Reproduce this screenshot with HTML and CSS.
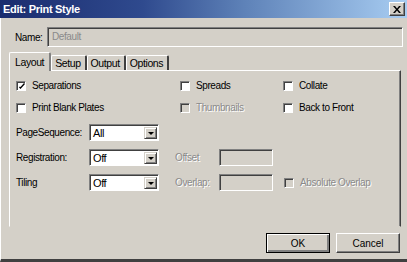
FILE: index.html
```html
<!DOCTYPE html>
<html lang="en">
<head>
    <meta charset="UTF-8">
    <title>Edit: Print Style</title>
    <link rel="stylesheet" href="styles.css">
</head>
<body>
    <div class="window">
        <div class="titlebar">
            <span class="title">Edit: Print Style</span>
            <div class="close">
                <svg width="8" height="7" viewBox="0 0 8 7"><path d="M0 0h2l2 2.5L6 0h2L5 3.5 8 7H6L4 4.5 2 7H0l3-3.5z" fill="#000"/></svg>
            </div>
        </div>
        <div class="content">
            <div class="name-row">
                <label class="name-label">Name:</label>
                <div class="field wide disabled">Default</div>
            </div>

            <div class="tabs">
                <div class="tab active">Layout</div>
                <div class="tab">Setup</div>
                <div class="tab">Output</div>
                <div class="tab">Options</div>
            </div>

            <div class="panel">
                <div class="row first">
                    <label class="cell c1"><span class="check checked"><svg width="6" height="6" viewBox="0 0 6 6"><path d="M0 4.5l1.5 1.5L6 1 5 0 1.5 4 .8 3.5z" fill="#000"/></svg></span>Separations</label>
                    <label class="cell c2"><span class="check"></span>Spreads</label>
                    <label class="cell c3"><span class="check"></span>Collate</label>
                </div>
                <div class="row second">
                    <label class="cell c1"><span class="check"></span>Print Blank Plates</label>
                    <label class="cell c2 off"><span class="check"></span>Thumbnails</label>
                    <label class="cell c3"><span class="check"></span>Back to Front</label>
                </div>
                <div class="row">
                    <span class="field-label">PageSequence:</span>
                    <div class="select"><span class="value">All</span><span class="drop"><i></i></span></div>
                </div>
                <div class="row">
                    <span class="field-label">Registration:</span>
                    <div class="select"><span class="value">Off</span><span class="drop"><i></i></span></div>
                    <span class="side-label off">Offset</span>
                    <div class="field small disabled"></div>
                </div>
                <div class="row">
                    <span class="field-label">Tiling</span>
                    <div class="select"><span class="value">Off</span><span class="drop"><i></i></span></div>
                    <span class="side-label off">Overlap:</span>
                    <div class="field small disabled"></div>
                    <label class="cell abs off"><span class="check"></span>Absolute Overlap</label>
                </div>
            </div>

            <div class="actions">
                <button class="btn default">OK</button>
                <button class="btn">Cancel</button>
            </div>
        </div>
    </div>
</body>
</html>
```

FILE: styles.css
```css
* {
    box-sizing: border-box;
}
body {
    margin: 0;
    font-family: "Liberation Sans", Arial, sans-serif;
    font-size: 10px;
    letter-spacing: -0.4px;
    color: #000;
    background: #d4d0c8;
}
.window {
    width: 407px;
    height: 262px;
    background: #d4d0c8;
    border-left: 1px solid #fff;
    border-bottom: 3px solid #404040;
}
.titlebar {
    height: 18px;
    margin-left: -1px;
    display: flex;
    align-items: center;
    justify-content: space-between;
    padding: 0 2px 0 3px;
    background: linear-gradient(to right, #1a2c6e, #2f4a8e 35%, #5e82b8 60%, #a8cdf2);
}
.title {
    color: #fff;
    font-weight: bold;
    font-size: 11px;
    letter-spacing: -0.3px;
}
.close {
    width: 16px;
    height: 14px;
    background: #d4d0c8;
    border: 1px solid;
    border-color: #fff #404040 #404040 #fff;
    box-shadow: inset -1px -1px 0 #808080;
    display: flex;
    align-items: center;
    justify-content: center;
}
.content {
    padding: 0 6px 0 8px;
}
.name-row {
    display: flex;
    align-items: center;
    margin-top: 9px;
    padding-left: 6px;
}
.name-label {
    width: 32px;
}
.field {
    height: 20px;
    border: 1px solid;
    border-color: #808080 #fff #fff #808080;
    box-shadow: inset 1px 1px 0 #404040;
    background: #fff;
    padding: 3px 4px;
    white-space: nowrap;
}
.field.wide {
    flex: 1;
    margin-right: -2px;
}
.field.disabled {
    background: #d4d0c8;
    color: #8a8a8a;
}
.field.small {
    width: 54px;
    height: 17px;
}
.tabs {
    display: flex;
    align-items: flex-end;
    height: 18px;
    margin-top: 5px;
}
.tab {
    height: 15px;
    padding: 1px 4px 0 3px;
    border: 1px solid #fff;
    border-bottom: none;
    border-right: 2px solid #404040;
    border-radius: 2px 2px 0 0;
    background: #d4d0c8;
    font-size: 10.5px;
    line-height: 13px;
}
.tab.active {
    height: 19px;
    margin-bottom: -1px;
    padding: 3px 5px 0 5px;
    position: relative;
    z-index: 1;
    border-right-color: #808080;
}
.panel {
    height: 157px;
    border: 1px solid;
    border-color: #fff #404040 transparent #fff;
    box-shadow: inset -1px 0 0 #808080;
    padding: 6px 0 0 6px;
}
.row {
    display: flex;
    align-items: center;
    height: 17px;
    margin-top: 8px;
}
.row.first {
    margin-top: 0;
}
.row.second {
    margin-top: 5px;
}
.cell {
    display: flex;
    align-items: center;
    gap: 6px;
}
.c1 {
    width: 164px;
}
.c2 {
    width: 103px;
}
.abs {
    margin-left: 11px;
}
.check {
    width: 10px;
    height: 10px;
    border: 1px solid;
    border-color: #808080 #fff #fff #808080;
    box-shadow: inset 1px 1px 0 #404040;
    background: #fff;
    display: flex;
    align-items: center;
    justify-content: center;
    padding: 1px 0 0 1px;
}
.off {
    color: #8a8a8a;
    text-shadow: 1px 1px 0 #fff;
}
.off .check {
    background: #d4d0c8;
}
.field-label {
    width: 73px;
}
.select {
    width: 70px;
    height: 17px;
    display: flex;
    border: 1px solid;
    border-color: #808080 #fff #fff #808080;
    box-shadow: inset 1px 1px 0 #404040;
    background: #fff;
    padding: 2px 1px 1px 2px;
}
.select .value {
    flex: 1;
    padding-left: 1px;
    font-size: 11px;
    line-height: 12px;
}
.drop {
    width: 13px;
    border: 1px solid;
    border-color: #d4d0c8 #404040 #404040 #d4d0c8;
    box-shadow: inset 1px 1px 0 #fff, inset -1px -1px 0 #808080;
    background: #d4d0c8;
    display: flex;
    align-items: center;
    justify-content: center;
}
.drop i {
    border-left: 3px solid transparent;
    border-right: 3px solid transparent;
    border-top: 3px solid #000;
}
.side-label {
    width: 44px;
    margin-left: 16px;
}
.actions {
    display: flex;
    justify-content: flex-end;
    gap: 6px;
    margin-top: 6px;
    padding-right: 1px;
}
.btn {
    width: 64px;
    height: 20px;
    font-family: inherit;
    font-size: 10px;
    background: #d4d0c8;
    border: 1px solid;
    border-color: #fff #404040 #404040 #fff;
    box-shadow: inset -1px -1px 0 #808080;
    padding: 0;
}
.btn.default {
    border: 1px solid #000;
    box-shadow: inset 1px 1px 0 #fff, inset -2px -2px 0 #808080;
}
```
